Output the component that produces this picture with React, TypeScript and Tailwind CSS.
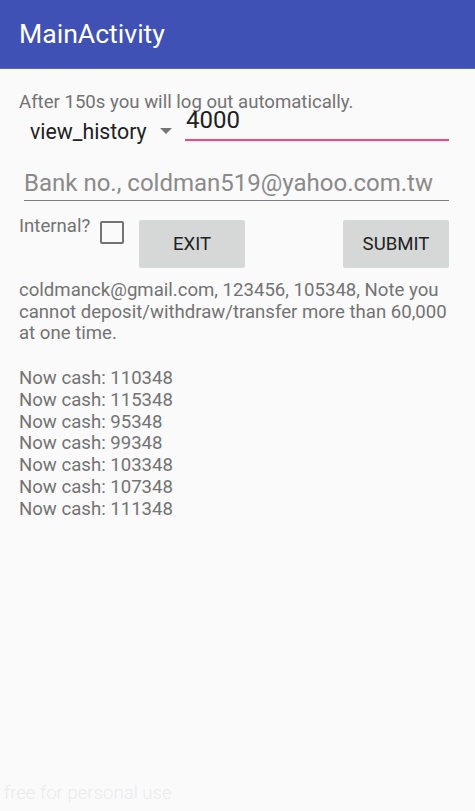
import React from "react";

const history = [110348, 115348, 95348, 99348, 103348, 107348, 111348];

const App = () => {
  return (
    <div
      className="min-h-[811px] w-[475px] flex flex-col bg-[#fafafa] text-[#737373]"
      style={{ fontFamily: "Roboto, 'Liberation Sans', sans-serif" }}
    >
      <header className="h-[69px] bg-[#3f51b5] border-b border-[#5567c4] flex items-center px-[19px]">
        <h1 className="text-white text-[26.6px] leading-none">MainActivity</h1>
      </header>

      <main className="px-[19px] pt-[23px]">
        <p className="text-[18.6px] leading-[21.7px]">After 150s you will log out automatically.</p>

        {/* spinner + amount */}
        <div className="flex items-start -mt-[4px] mr-[7px] h-[31px]">
          <div className="flex items-start w-[166px] pl-[11px]">
            <span className="mt-[10px] text-[21.3px] leading-[24px] text-[#212121]">view_history</span>
            <svg width="12" height="6" viewBox="0 0 12 6" className="ml-[13px] mt-[18px]">
              <path d="M0 0 L12 0 L6 6 Z" fill="#757575" />
            </svg>
          </div>
          <div className="flex-1 h-[31px] border-b-2 border-[#ff4081] pl-[1px]">
            <span className="block text-[24px] leading-[20px] text-[#212121]">4000</span>
          </div>
        </div>

        {/* bank no */}
        <div className="ml-[5px] mr-[7px] mt-[28px] border-b border-[#7a7a7a] pb-[3px]">
          <span className="block text-[24px] leading-[28px] text-[#8a8a8a]">Bank no., coldman519@yahoo.com.tw</span>
        </div>

        {/* internal + buttons */}
        <div className="flex items-start mt-[19px] mr-[7px]">
          <span className="w-[81px] -mt-[4px] text-[18.6px] leading-[21.7px]">Internal?</span>
          <div className="mt-[1px] w-[24px] h-[23px] border-[2.5px] border-[#737373] rounded-[2px]" />
          <button className="ml-[15px] w-[106px] h-[48px] pt-[2px] bg-[#d6d7d7] rounded-[2px] text-[18.6px] text-[#212121]">
            EXIT
          </button>
          <div className="flex-1" />
          <button className="w-[106px] h-[48px] pt-[2px] bg-[#d6d7d7] rounded-[2px] text-[18.6px] text-[#212121]">
            SUBMIT
          </button>
        </div>

        <p className="mt-[12px] text-[18.6px] leading-[21.8px]">
          coldmanck@gmail.com, 123456, 105348, Note you cannot deposit/withdraw/transfer more than 60,000 at one time.
        </p>

        <div className="mt-[23px] text-[18.6px] leading-[21.8px]">
          {history.map((v, i) => (
            <div key={i}>Now cash: {v}</div>
          ))}
        </div>
      </main>

      <div className="mt-auto pl-[4px] pb-[3px] text-[18.6px] font-light text-[#ebebeb]">free for personal use</div>
    </div>
  );
};

export default App;
